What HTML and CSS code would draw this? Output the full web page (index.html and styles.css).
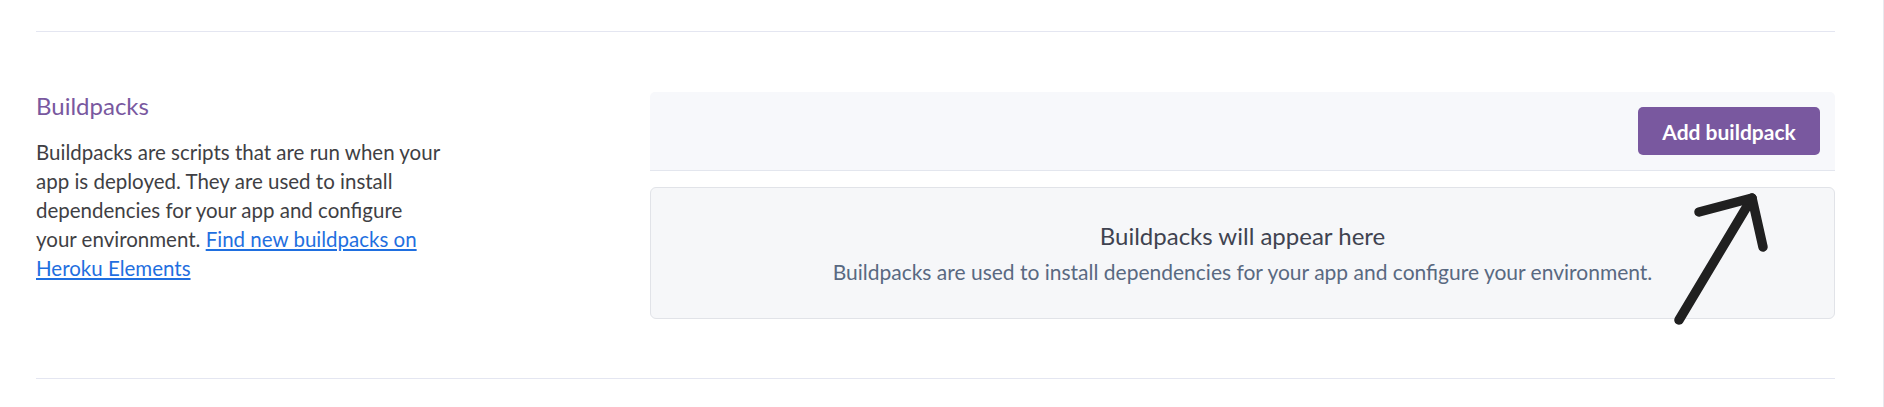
FILE: index.html
```html
<!DOCTYPE html>
<html lang="en">
<head>
<meta charset="utf-8">
<title>Buildpacks</title>
<link rel="stylesheet" href="styles.css">
</head>
<body>
<div class="page">
  <section class="settings-section">
    <div class="section-info">
      <h3 class="section-title">Buildpacks</h3>
      <p class="section-desc">Buildpacks are scripts that are run when your app is deployed. They are used to install dependencies for your app and configure your environment. <a href="#" class="link">Find new buildpacks on Heroku Elements</a></p>
    </div>
    <div class="section-main">
      <div class="toolbar">
        <button class="btn-primary" type="button">Add buildpack</button>
      </div>
      <div class="empty-state">
        <div class="empty-title">Buildpacks will appear here</div>
        <div class="empty-sub">Buildpacks are used to install dependencies for your app and configure your environment.</div>
      </div>
    </div>
  </section>
  <svg class="annotation" width="1884" height="407" viewBox="0 0 1884 407" aria-hidden="true">
    <g fill="none" stroke="#202020" stroke-width="9.5" stroke-linecap="round" stroke-linejoin="round">
      <path d="M1679 320 L1752 198"/>
      <path d="M1699 212 L1752 198 L1763 247"/>
    </g>
  </svg>
</div>
</body>
</html>
```

FILE: styles.css
```css
html, body {
  margin: 0;
  padding: 0;
  background: #ffffff;
}

body {
  font-family: Lato, "Open Sans", "Liberation Sans", sans-serif;
  color: #3f3f44;
  height: 407px;
  overflow: hidden;
  border-right: 1px solid #e9e9ee;
  box-sizing: border-box;
}

.page {
  position: relative;
  padding: 31px 48px 0 36px;
}

.settings-section {
  display: flex;
  border-top: 1px solid #e4e6f1;
  border-bottom: 1px solid #e4e6f1;
  padding: 60px 0 59px;
}

.section-info {
  width: 614px;
  flex: none;
}

.section-title {
  margin: 0;
  font-size: 24px;
  line-height: 28.8px;
  font-weight: 400;
  color: #79589f;
}

.section-desc {
  margin: 17px 0 0;
  max-width: 409px;
  font-size: 20.5px;
  line-height: 29px;
  color: #3f3f44;
}

.link {
  color: #1f6fe0;
  text-decoration: underline;
  text-underline-offset: 2px;
}

.section-main {
  flex: 1;
  min-width: 0;
}

.toolbar {
  display: flex;
  justify-content: flex-end;
  padding: 15px 15px 15px;
  background: #f7f8fb;
  border-radius: 5px 5px 0 0;
  border-bottom: 1px solid #e3e6ee;
}

.btn-primary {
  height: 48px;
  width: 182px;
  border: none;
  border-radius: 5px;
  background: #79589f;
  color: #ffffff;
  font-family: inherit;
  font-size: 21px;
  font-weight: 700;
  cursor: pointer;
}

.empty-state {
  margin-top: 16px;
  border: 1px solid #e1e3e8;
  border-radius: 6px;
  background: #f6f7f9;
  padding: 33px 20px 34px;
  text-align: center;
}

.empty-title {
  font-size: 24px;
  line-height: 29px;
  color: #3f4350;
}

.empty-sub {
  margin-top: 9px;
  font-size: 21px;
  line-height: 25px;
  color: #596981;
}

.annotation {
  position: absolute;
  left: 0;
  top: 0;
  pointer-events: none;
}
```
